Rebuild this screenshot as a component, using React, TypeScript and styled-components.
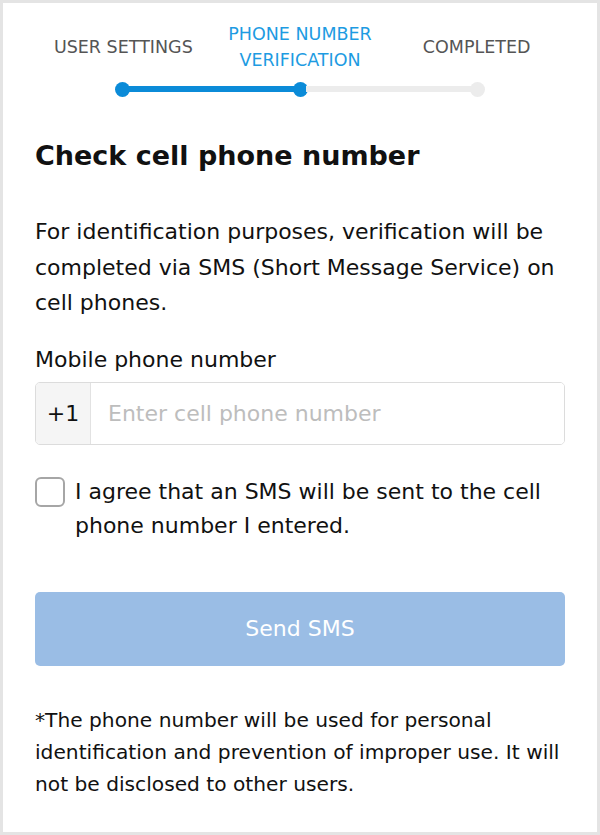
import React from "react";
import styled, { createGlobalStyle } from "styled-components";

const GlobalStyle = createGlobalStyle`
  html, body {
    margin: 0;
    padding: 0;
    background: #fff;
  }
  * {
    box-sizing: border-box;
  }
  body {
    font-family: "DejaVu Sans", "Liberation Sans", Arial, sans-serif;
    color: #111;
  }
`;

const Frame = styled.div`
  width: 600px;
  height: 835px;
  border: 3px solid #e4e4e4;
  padding: 19px 32px 0;
  background: #fff;
`;

const Steps = styled.div`
  display: grid;
  grid-template-columns: repeat(3, 1fr);
  height: 51px;
`;

const StepLabel = styled.div<{ $active?: boolean }>`
  display: flex;
  align-items: center;
  justify-content: center;
  text-align: center;
  font-size: 17.5px;
  line-height: 25.5px;
  text-transform: uppercase;
  color: ${(p) => (p.$active ? "#1d9be2" : "#555")};
`;

const Progress = styled.div`
  display: flex;
  align-items: center;
  margin: 9px 80px 0;
  height: 14px;
`;

const Dot = styled.div<{ $done?: boolean }>`
  width: 15px;
  height: 15px;
  border-radius: 50%;
  flex: none;
  background: ${(p) => (p.$done ? "#0b8bd8" : "#ececec")};
`;

const Segment = styled.div<{ $done?: boolean }>`
  flex: 1;
  height: 6px;
  margin: 0 -2px;
  background: ${(p) => (p.$done ? "#0b8bd8" : "#ececec")};
`;

const Title = styled.h1`
  margin: 44px 0 0;
  font-size: 27px;
  line-height: 32px;
  font-weight: 700;
  color: #111;
`;

const Lead = styled.p`
  margin: 42px 0 0;
  font-size: 22px;
  line-height: 35.5px;
`;

const FieldLabel = styled.label`
  display: block;
  margin-top: 24px;
  font-size: 22px;
  line-height: 30px;
`;

const InputGroup = styled.div`
  display: flex;
  margin-top: 7px;
  height: 63px;
  border: 1.5px solid #dcdcdc;
  border-radius: 5px;
  overflow: hidden;
`;

const Prefix = styled.div`
  display: flex;
  align-items: center;
  justify-content: center;
  width: 55px;
  flex: none;
  background: #f5f5f5;
  border-right: 1.5px solid #e2e2e2;
  font-size: 22px;
  color: #111;
`;

const PhoneInput = styled.input`
  flex: 1;
  min-width: 0;
  border: none;
  outline: none;
  padding: 0 17px;
  font-family: inherit;
  font-size: 22px;
  color: #111;
  background: #fff;
  &::placeholder {
    color: #bdbdbd;
  }
`;

const AgreeRow = styled.label`
  display: flex;
  align-items: flex-start;
  gap: 10px;
  margin-top: 30px;
  font-size: 22px;
  line-height: 34px;
`;

const Box = styled.span`
  width: 30px;
  height: 30px;
  flex: none;
  margin-top: 2px;
  border: 2px solid #a6a6a6;
  border-radius: 6px;
  background: #fff;
`;

const SendButton = styled.button`
  display: block;
  width: 100%;
  height: 74px;
  margin-top: 49px;
  border: none;
  border-radius: 5px;
  background: #9abde5;
  color: #fff;
  font-family: inherit;
  font-size: 22px;
  cursor: default;
`;

const Note = styled.p`
  margin: 38px 0 0;
  font-size: 20.2px;
  line-height: 32px;
`;

export default function App() {
  return (
    <>
      <GlobalStyle />
      <Frame>
        <Steps>
          <StepLabel>User settings</StepLabel>
          <StepLabel $active>
            Phone number
            <br />
            verification
          </StepLabel>
          <StepLabel>Completed</StepLabel>
        </Steps>
        <Progress>
          <Dot $done />
          <Segment $done />
          <Dot $done />
          <Segment />
          <Dot />
        </Progress>

        <Title>Check cell phone number</Title>
        <Lead>
          For identification purposes, verification will be completed via SMS
          (Short Message Service) on cell phones.
        </Lead>

        <FieldLabel htmlFor="phone">Mobile phone number</FieldLabel>
        <InputGroup>
          <Prefix>+1</Prefix>
          <PhoneInput id="phone" placeholder="Enter cell phone number" />
        </InputGroup>

        <AgreeRow>
          <Box />
          <span>I agree that an SMS will be sent to the cell phone number I entered.</span>
        </AgreeRow>

        <SendButton disabled>Send SMS</SendButton>

        <Note>
          *The phone number will be used for personal identification and
          prevention of improper use. It will not be disclosed to other users.
        </Note>
      </Frame>
    </>
  );
}
